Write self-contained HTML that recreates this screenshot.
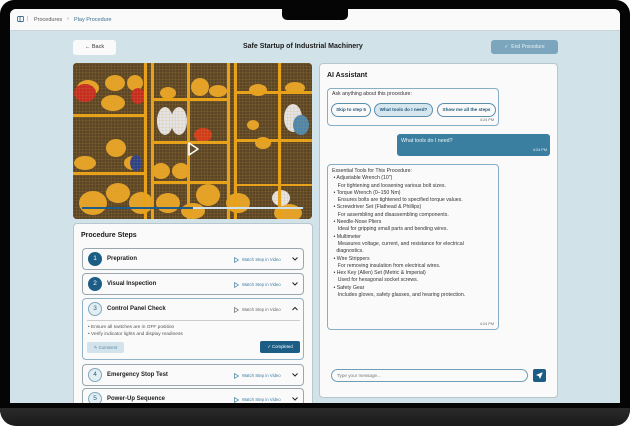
<!DOCTYPE html>
<html><head><meta charset="utf-8"><style>
*{box-sizing:border-box;margin:0;padding:0}
body{width:630px;height:426px;overflow:hidden;background:#fff;font-family:"Liberation Sans",sans-serif;position:relative}
.a{position:absolute}
.frame{left:0;top:0;width:630px;height:412px;background:#050505;border-radius:14px 14px 0 0}
.base{left:0;top:408px;width:630px;height:18px;background:linear-gradient(#2a2a2a,#1a1a1a);border-radius:0 0 16px 16px}
.screen{left:10px;top:9px;width:610px;height:394px;background:#d2e2e9;overflow:hidden;border-radius:6px 6px 0 0}
.notch{left:282px;top:0;width:66px;height:20px;background:#050505;border-radius:0 0 5px 5px}
.hdr{left:0;top:0;width:610px;height:22px;background:#fafafa;border-bottom:1px solid #c9d3d8;font-size:5.5px;color:#555}
.card{background:#fafafa;border:1px solid #b8c6cd;border-radius:4px}
.step{left:8px;width:222px;height:22px;background:#fafafa;border:1px solid #9aa7ad;border-radius:4px;font-size:6px;font-weight:bold;color:#222}
.num{left:5px;top:3px;width:14px;height:14px;border-radius:50%;background:#1c5d85;color:#fff;font-size:6.5px;text-align:center;line-height:14px;font-weight:normal}
.num.o{background:#e3eef3;color:#2d5f7c;border:1px solid #7fa8bf;line-height:12px}
.t{left:24px;top:7px}
.w{left:151px;top:8px;font-size:4.3px;color:#3f7aa0;font-weight:normal}
.tri{display:inline-block;width:5px;height:6px;vertical-align:middle;margin-right:3px}
.chev{left:208px;top:7px;width:8px;height:6px}
.chat{font-size:5.2px;color:#333;line-height:7.3px}
.chip{top:14px;height:14px;border:1px solid #5b8fae;border-radius:7px;font-size:4.6px;font-weight:bold;color:#245a7d;text-align:center;line-height:12px;background:#fafafa}
</style></head><body>
<div class="a frame"></div>
<div class="a base"></div>
<div class="a screen">
 <div class="a hdr">
  <svg class="a" style="left:7px;top:7px" width="7" height="6" viewBox="0 0 7 6"><rect x="0.5" y="0.5" width="6" height="5" rx="1" fill="none" stroke="#3a6f92" stroke-width="0.9"/><line x1="3" y1="0.5" x2="3" y2="5.5" stroke="#3a6f92" stroke-width="0.9"/></svg>
  <span class="a" style="left:17px;top:7px;color:#999">|</span>
  <span class="a" style="left:24px;top:7.5px">Procedures</span>
  <span class="a" style="left:57px;top:7px;color:#777">›</span>
  <span class="a" style="left:64px;top:7.5px;color:#3a6f92">Play Procedure</span>
 </div>
 <div class="a" style="left:63px;top:31px;width:43px;height:15px;background:#fafafa;border-radius:3px;font-size:5.5px;color:#333;text-align:center;line-height:15px">← Back</div>
 <div class="a" style="left:233px;top:34px;font-size:7px;font-weight:bold;color:#1a1a1a">Safe Startup of Industrial Machinery</div>
 <div class="a" style="left:481px;top:31px;width:67px;height:14px;background:#7ba6bd;border-radius:3px;font-size:5px;color:#e8f1f5;text-align:center;line-height:14px">✓&nbsp; End Procedure</div>

 <div class="a" style="left:63px;top:54px;width:239px;height:156px;border-radius:4px;overflow:hidden;background:#3a2a12">
 <svg width="239" height="156" viewBox="0 0 239 156">
  <defs><pattern id="m" width="3.2" height="3.2" patternUnits="userSpaceOnUse"><path d="M0 0H3.2M0 0V3.2" stroke="#d09a3a" stroke-width="0.4" opacity="0.75"/></pattern></defs>
  <rect width="239" height="156" fill="#5a4526"/>
  <g fill="#e6a326">
   <ellipse cx="15" cy="25" rx="11" ry="8"/><ellipse cx="42" cy="20" rx="10" ry="8"/><ellipse cx="62" cy="20" rx="8" ry="8"/><ellipse cx="40" cy="40" rx="12" ry="8"/>
   <ellipse cx="95" cy="30" rx="8" ry="6"/><ellipse cx="127" cy="24" rx="9" ry="9"/><ellipse cx="145" cy="28" rx="9" ry="6"/>
   <ellipse cx="185" cy="27" rx="9" ry="6"/><ellipse cx="222" cy="25" rx="10" ry="6"/>
   <ellipse cx="43" cy="85" rx="10" ry="9"/><ellipse cx="12" cy="100" rx="11" ry="7"/><ellipse cx="60" cy="100" rx="9" ry="7"/>
   <ellipse cx="88" cy="108" rx="9" ry="8"/><ellipse cx="108" cy="108" rx="9" ry="8"/><ellipse cx="190" cy="80" rx="8" ry="6"/><ellipse cx="180" cy="62" rx="6" ry="5"/>
   <ellipse cx="20" cy="140" rx="14" ry="12"/><ellipse cx="45" cy="130" rx="12" ry="10"/><ellipse cx="68" cy="140" rx="12" ry="11"/><ellipse cx="95" cy="140" rx="12" ry="10"/><ellipse cx="135" cy="132" rx="12" ry="11"/><ellipse cx="120" cy="148" rx="12" ry="8"/><ellipse cx="215" cy="150" rx="14" ry="9"/><ellipse cx="165" cy="140" rx="12" ry="10"/>
  </g>
  <ellipse cx="12" cy="30" rx="11" ry="9" fill="#c62a22"/><ellipse cx="65" cy="33" rx="7" ry="8" fill="#c62a22"/><ellipse cx="130" cy="72" rx="9" ry="7" fill="#d23a1c"/>
  <ellipse cx="63" cy="100" rx="6" ry="8" fill="#2a3f8a"/>
  <g fill="#e4e4e8"><ellipse cx="92" cy="58" rx="8" ry="14"/><ellipse cx="106" cy="58" rx="8" ry="14"/><ellipse cx="220" cy="55" rx="9" ry="14"/><ellipse cx="208" cy="135" rx="9" ry="8"/></g>
  <ellipse cx="228" cy="62" rx="8" ry="10" fill="#4a86b0"/>
  <rect width="239" height="156" fill="url(#m)"/>
  <g fill="#e8a21a">
   <rect x="71" y="0" width="3" height="156"/><rect x="78" y="0" width="3" height="156"/><rect x="114" y="0" width="3" height="156"/><rect x="154" y="0" width="3" height="156"/><rect x="161" y="0" width="3" height="156"/><rect x="205" y="0" width="3" height="156"/>
   <rect x="0" y="51" width="72" height="3"/><rect x="78" y="35" width="78" height="3"/><rect x="162" y="28" width="77" height="3"/><rect x="0" y="109" width="72" height="3"/><rect x="78" y="78" width="78" height="3"/><rect x="162" y="76" width="77" height="3"/><rect x="78" y="118" width="78" height="3"/><rect x="162" y="121" width="77" height="2"/>
  </g>
  <path d="M116 80 L116 92 L125 86 Z" fill="none" stroke="#fff" stroke-width="1.6" stroke-linejoin="round"/>
  <rect x="9" y="144" width="111" height="2" fill="#1f5c87"/><rect x="120" y="144" width="110" height="2" fill="#cfe1ea"/>
 </svg>
 </div>

 <div class="a card" style="left:63px;top:214px;width:240px;height:190px">
  <div class="a" style="left:7px;top:8px;font-size:7px;font-weight:bold;color:#1a1a1a">Procedure Steps</div>
  <div class="a step" style="top:24px"><div class="a num">1</div><div class="a t">Prepration</div><div class="a w"><svg class="tri" viewBox="0 0 5 6"><path d="M0.6 0.6L4.4 3L0.6 5.4Z" fill="none" stroke="#3f7aa0" stroke-width="0.7"/></svg>Watch Step in Video</div><svg class="a chev" viewBox="0 0 8 6"><path d="M1.5 1.5L4 4L6.5 1.5" fill="none" stroke="#222" stroke-width="1"/></svg></div>
  <div class="a step" style="top:49px"><div class="a num">2</div><div class="a t">Visual Inspection</div><div class="a w"><svg class="tri" viewBox="0 0 5 6"><path d="M0.6 0.6L4.4 3L0.6 5.4Z" fill="none" stroke="#3f7aa0" stroke-width="0.7"/></svg>Watch Step in Video</div><svg class="a chev" viewBox="0 0 8 6"><path d="M1.5 1.5L4 4L6.5 1.5" fill="none" stroke="#222" stroke-width="1"/></svg></div>
  <div class="a step" style="top:74px;height:62px;border-color:#8fb3c8"><div class="a num o">3</div><div class="a t">Control Panel Check</div><div class="a w" style="color:#666"><svg class="tri" viewBox="0 0 5 6"><path d="M0.6 0.6L4.4 3L0.6 5.4Z" fill="none" stroke="#666" stroke-width="0.7"/></svg>Watch Step in Video</div><svg class="a chev" viewBox="0 0 8 6"><path d="M1.5 4L4 1.5L6.5 4" fill="none" stroke="#222" stroke-width="1"/></svg>
   <div class="a" style="left:4px;top:21px;width:213px;height:1px;background:#ccc"></div>
   <div class="a" style="left:5px;top:25px;font-size:4.8px;font-weight:normal;color:#555;line-height:7px">• Ensure all switches are in OFF position<br>• Verify indicator lights and display readiness</div>
   <div class="a" style="left:4px;top:43px;width:37px;height:11px;background:#d3e3eb;border-radius:2px;font-size:4.3px;color:#5a87a3;font-weight:normal;text-align:center;line-height:11px">✎ Comment</div>
   <div class="a" style="left:177px;top:42px;width:40px;height:12px;background:#1c5d85;border-radius:2px;font-size:4.3px;color:#fff;font-weight:normal;text-align:center;line-height:12px">✓ Completed</div>
  </div>
  <div class="a step" style="top:140px"><div class="a num o">4</div><div class="a t">Emergency Stop Test</div><div class="a w"><svg class="tri" viewBox="0 0 5 6"><path d="M0.6 0.6L4.4 3L0.6 5.4Z" fill="none" stroke="#3f7aa0" stroke-width="0.7"/></svg>Watch Step in Video</div><svg class="a chev" viewBox="0 0 8 6"><path d="M1.5 1.5L4 4L6.5 1.5" fill="none" stroke="#222" stroke-width="1"/></svg></div>
  <div class="a step" style="top:164px"><div class="a num o">5</div><div class="a t">Power-Up Sequence</div><div class="a w"><svg class="tri" viewBox="0 0 5 6"><path d="M0.6 0.6L4.4 3L0.6 5.4Z" fill="none" stroke="#3f7aa0" stroke-width="0.7"/></svg>Watch Step in Video</div><svg class="a chev" viewBox="0 0 8 6"><path d="M1.5 1.5L4 4L6.5 1.5" fill="none" stroke="#222" stroke-width="1"/></svg></div>
 </div>

 <div class="a card" style="left:309px;top:54px;width:239px;height:335px">
  <div class="a" style="left:7px;top:8px;font-size:7px;font-weight:bold;color:#1a1a1a">AI Assistant</div>
  <div class="a chat" style="left:7px;top:24px;width:172px;height:38px;border:1px solid #86aec4;border-radius:4px">
   <div class="a" style="left:4px;top:2px">Ask anything about this procedure:</div>
   <div class="a chip" style="left:3px;width:40px">Skip to step 5</div>
   <div class="a chip" style="left:46px;width:59px;background:#d6e6ee">What tools do I need?</div>
   <div class="a chip" style="left:109px;width:59px">Show me all the steps</div>
   <div class="a" style="right:4px;top:28px;font-size:3.8px;color:#666">4:24 PM</div>
  </div>
  <div class="a" style="left:77px;top:70px;width:153px;height:22px;background:#3b7fa0;border-radius:3px;font-size:5.3px;color:#eef5f8">
   <div class="a" style="left:4px;top:4px">What tools do I need?</div>
   <div class="a" style="right:3px;top:14px;font-size:3.8px">4:24 PM</div>
  </div>
  <div class="a chat" style="left:7px;top:100px;width:172px;height:166px;border:1px solid #86aec4;border-radius:4px">
   <div class="a" style="left:4px;top:3px;width:168px">Essential Tools for This Procedure:<br>
   &nbsp;• Adjustable Wrench (10")<br>&nbsp;&nbsp;&nbsp;&nbsp;For tightening and loosening various bolt sizes.<br>
   &nbsp;• Torque Wrench (0–150 Nm)<br>&nbsp;&nbsp;&nbsp;&nbsp;Ensures bolts are tightened to specified torque values.<br>
   &nbsp;• Screwdriver Set (Flathead &amp; Phillips)<br>&nbsp;&nbsp;&nbsp;&nbsp;For assembling and disassembling components.<br>
   &nbsp;• Needle-Nose Pliers<br>&nbsp;&nbsp;&nbsp;&nbsp;Ideal for gripping small parts and bending wires.<br>
   &nbsp;• Multimeter<br>&nbsp;&nbsp;&nbsp;&nbsp;Measures voltage, current, and resistance for electrical<br>&nbsp;&nbsp;&nbsp;diagnostics.<br>
   &nbsp;• Wire Strippers<br>&nbsp;&nbsp;&nbsp;&nbsp;For removing insulation from electrical wires.<br>
   &nbsp;• Hex Key (Allen) Set (Metric &amp; Imperial)<br>&nbsp;&nbsp;&nbsp;&nbsp;Used for hexagonal socket screws.<br>
   &nbsp;• Safety Gear<br>&nbsp;&nbsp;&nbsp;&nbsp;Includes gloves, safety glasses, and hearing protection.</div>
   <div class="a" style="right:4px;top:156px;font-size:3.8px;color:#666">4:24 PM</div>
  </div>
  <div class="a" style="left:11px;top:305px;width:197px;height:13px;border:1px solid #6f9cb6;border-radius:7px;font-size:4.6px;color:#777;padding-left:5px;line-height:11px">Type your message...</div>
  <div class="a" style="left:213px;top:305px;width:13px;height:13px;background:#1c5d85;border-radius:2px">
   <svg width="13" height="13" viewBox="0 0 13 13"><path d="M9.5 3.5L3.5 6L6 7L7 9.5Z M6 7L9.5 3.5" fill="#fff" stroke="#fff" stroke-width="0.5" stroke-linejoin="round"/></svg>
  </div>
 </div>
</div>
<div class="a notch"></div>
</body></html>
